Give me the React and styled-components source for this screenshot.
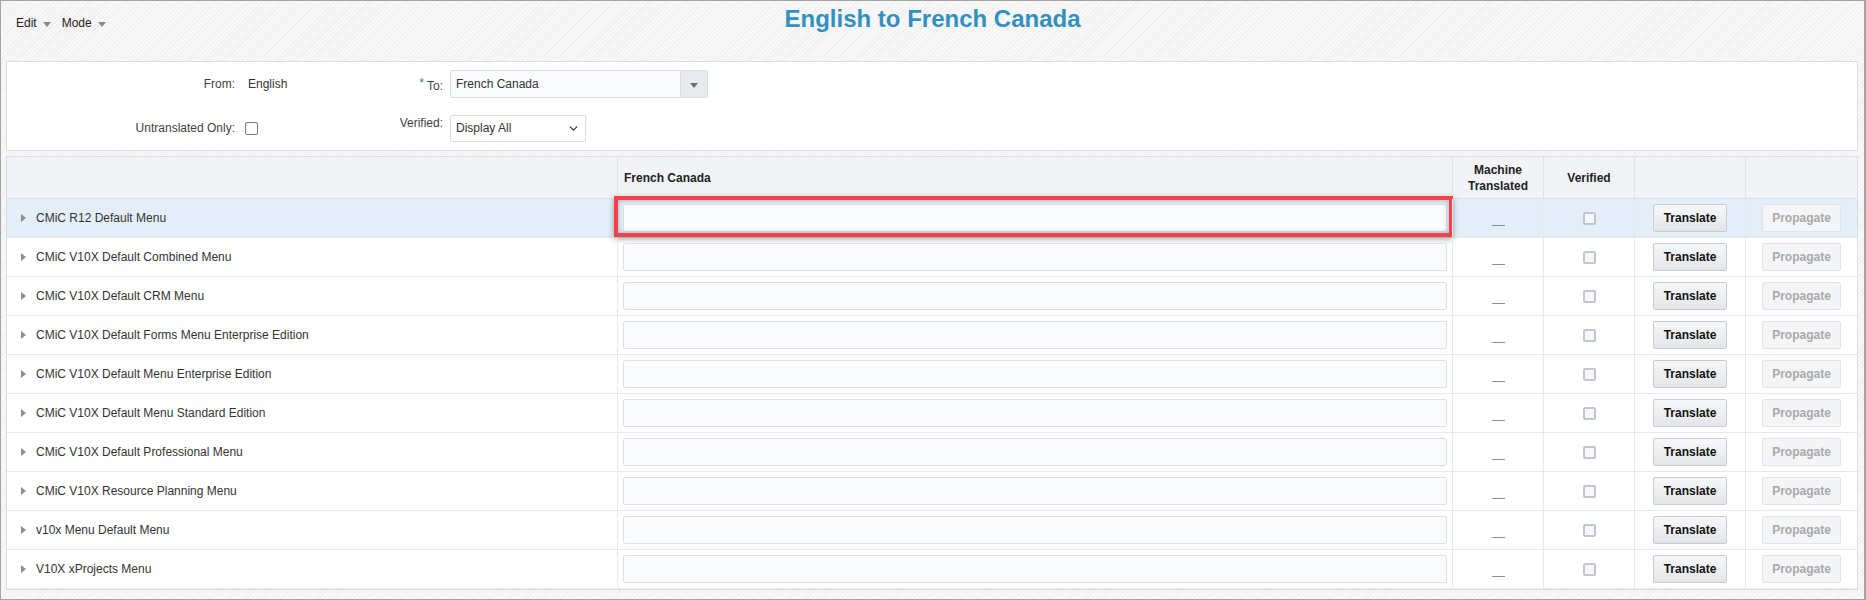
import React from 'react'
import styled, { createGlobalStyle } from 'styled-components'
import { ChevronDown } from 'lucide-react'

const GlobalStyle = createGlobalStyle`
  * { box-sizing: border-box; }
  body {
    margin: 0;
    font-family: 'Liberation Sans', Arial, sans-serif;
    font-size: 12px;
    color: #333;
  }
`

const ROWS = [
  'CMiC R12 Default Menu',
  'CMiC V10X Default Combined Menu',
  'CMiC V10X Default CRM Menu',
  'CMiC V10X Default Forms Menu Enterprise Edition',
  'CMiC V10X Default Menu Enterprise Edition',
  'CMiC V10X Default Menu Standard Edition',
  'CMiC V10X Default Professional Menu',
  'CMiC V10X Resource Planning Menu',
  'v10x Menu Default Menu',
  'V10X xProjects Menu',
]

const COLUMNS = '610px 835px 91px 91px 111px 1fr'

function App() {
  return (
    <>
      <GlobalStyle />
      <Page>
        <Toolbar>
          <Menus>
            <MenuItem>
              Edit <Caret />
            </MenuItem>
            <MenuItem>
              Mode <Caret />
            </MenuItem>
          </Menus>
          <Title>English to French Canada</Title>
          <div />
        </Toolbar>

        <FilterPanel>
          <Label>From:</Label>
          <Value>English</Value>
          <Label>
            <Req>*</Req> To:
          </Label>
          <Value pad='7px'>
            <Combo>
              <ComboText>French Canada</ComboText>
              <ComboButton>
                <Caret dark />
              </ComboButton>
            </Combo>
          </Value>

          <Label>Untranslated Only:</Label>
          <Value pad='10px'>
            <Check dark />
          </Value>
          <Label top>Verified:</Label>
          <Value pad='7px'>
            <Select>
              Display All
              <ChevronDown size={13} strokeWidth={2.2} color='#333' />
            </Select>
          </Value>
        </FilterPanel>

        <Grid>
          <HeaderRow>
            <HeadCell />
            <HeadCell align='left'>French Canada</HeadCell>
            <HeadCell>
              Machine
              <br />
              Translated
            </HeadCell>
            <HeadCell>Verified</HeadCell>
            <HeadCell />
            <HeadCell />
          </HeaderRow>
          {ROWS.map((name, i) => (
            <Row key={name} selected={i === 0}>
              <NameCell>
                <Expand />
                {name}
              </NameCell>
              <InputCell>
                <TextInput />
                {i === 0 && <Highlight />}
              </InputCell>
              <Cell>
                <Dash />
              </Cell>
              <Cell>
                <Check />
              </Cell>
              <Cell>
                <Button>Translate</Button>
              </Cell>
              <Cell>
                <Button disabled>Propagate</Button>
              </Cell>
            </Row>
          ))}
        </Grid>
      </Page>
    </>
  )
}

const Page = styled.div`
  width: 1866px;
  height: 600px;
  border: 1px solid #a3a3a3;
  border-right-width: 2px;
  background: repeating-linear-gradient(
    135deg,
    #f8f8f8 0px,
    #f8f8f8 2px,
    #efefef 2px,
    #efefef 3px
  );
`

const Toolbar = styled.div`
  display: grid;
  grid-template-columns: 1fr auto 1fr;
  align-items: start;
  height: 60px;
`

const Menus = styled.div`
  display: flex;
  gap: 11px;
  padding: 15px 0 0 15px;
`

const MenuItem = styled.div`
  display: flex;
  align-items: center;
  gap: 6px;
  color: #222;
  line-height: 14px;
`

const Caret = styled.span`
  width: 0;
  height: 0;
  border-left: 4px solid transparent;
  border-right: 4px solid transparent;
  border-top: 5px solid ${(p) => (p.dark ? '#6f6f6f' : '#8a8a8a')};
  margin-top: 2px;
`

const Title = styled.h1`
  margin: 4px 0 0;
  font-size: 24px;
  line-height: 28px;
  font-weight: bold;
  color: #3290bf;
`

const FilterPanel = styled.div`
  display: grid;
  grid-template-columns: 228px 110px 98px auto;
  grid-template-rows: 28px 28px;
  row-gap: 16px;
  align-items: center;
  height: 90px;
  margin: 0 6px 0 5px;
  padding: 8px 0;
  background: #fff;
  border: 1px solid #d6dfe6;
`

const Label = styled.div`
  text-align: right;
  color: #3f3f3f;
  align-self: ${(p) => (p.top ? 'start' : 'center')};
  padding-top: ${(p) => (p.top ? '2px' : '0')};
`

const Req = styled.span`
  color: #2b79c2;
  vertical-align: 3px;
`

const Value = styled.div`
  display: flex;
  align-items: center;
  padding-left: ${(p) => p.pad || '13px'};
  color: #333;
`

const Combo = styled.div`
  display: flex;
  width: 258px;
  height: 28px;
  border: 1px solid #d6dfe6;
  border-radius: 2px;
  background: #fbfcfe;
`

const ComboText = styled.div`
  flex: 1;
  display: flex;
  align-items: center;
  padding-left: 5px;
`

const ComboButton = styled.div`
  display: flex;
  align-items: center;
  justify-content: center;
  width: 27px;
  border-left: 1px solid #d6dfe6;
  background: #e8ebee;
`

const Select = styled.div`
  display: flex;
  align-items: center;
  justify-content: space-between;
  width: 136px;
  height: 27px;
  padding: 0 5px 0 5px;
  border: 1px solid #d6dfe6;
  border-radius: 2px;
  background: #fff;
`

const Check = styled.span`
  display: inline-block;
  width: 13px;
  height: 13px;
  border: ${(p) => (p.dark ? '1.5px solid #7b7b86' : '2px solid #c3c6ce')};
  border-radius: 2px;
  background: ${(p) => (p.dark ? '#fff' : '#f5f8fd')};
`

const Grid = styled.div`
  margin: 5px 6px 0 5px;
  height: 434px;
  background: #fff;
  border: 1px solid #d6dfe6;
`

const RowBase = styled.div`
  display: grid;
  grid-template-columns: ${COLUMNS};
`

const HeaderRow = styled(RowBase)`
  height: 42px;
  background: #f1f3f6;
  border-bottom: 1px solid #d9e0e7;
`

const HeadCell = styled.div`
  display: flex;
  align-items: center;
  justify-content: ${(p) => (p.align === 'left' ? 'flex-start' : 'center')};
  padding-left: ${(p) => (p.align === 'left' ? '6px' : '0')};
  text-align: center;
  font-weight: bold;
  line-height: 16px;
  color: #222;
  & + & {
    border-left: 1px solid #dfe3e8;
  }
`

const Row = styled(RowBase)`
  height: 39px;
  border-bottom: 1px solid #e6e8eb;
  background: ${(p) => (p.selected ? '#e3eef8' : '#fff')};
`

const Cell = styled.div`
  position: relative;
  display: flex;
  align-items: center;
  justify-content: center;
  border-left: 1px solid #e8eaed;
`

const NameCell = styled.div`
  display: flex;
  align-items: center;
  gap: 10px;
  padding-left: 14px;
  color: #333;
`

const Expand = styled.span`
  width: 0;
  height: 0;
  border-top: 4px solid transparent;
  border-bottom: 4px solid transparent;
  border-left: 5px solid #8e8e8e;
`

const InputCell = styled(Cell)`
  padding: 0 5px;
`

const TextInput = styled.div`
  width: 100%;
  height: 28px;
  border: 1px solid #dde1e5;
  border-radius: 2px;
  background: #f9fbfd;
`

const Highlight = styled.span`
  position: absolute;
  top: -3px;
  left: -4px;
  right: -1px;
  bottom: 0;
  border: 4px solid #f2434b;
  box-shadow: 0 2px 6px rgba(0, 0, 0, 0.35), inset 0 0 5px rgba(60, 80, 100, 0.45);
  pointer-events: none;
`

const Dash = styled.span`
  width: 13px;
  height: 1px;
  margin-top: 15px;
  background: #8f8f8f;
`

const Button = styled.button`
  height: 28px;
  padding: 0 ${(p) => (p.disabled ? '9px' : '10px')};
  font-family: inherit;
  font-size: 12px;
  font-weight: bold;
  color: ${(p) => (p.disabled ? '#a9a9a9' : '#111')};
  border: 1px solid ${(p) => (p.disabled ? '#e1e4e8' : '#c5ccd3')};
  border-radius: 2px;
  background: ${(p) =>
    p.disabled ? '#f4f5f6' : 'linear-gradient(#f6f7f8, #e3e6e9)'};
`

export default App
